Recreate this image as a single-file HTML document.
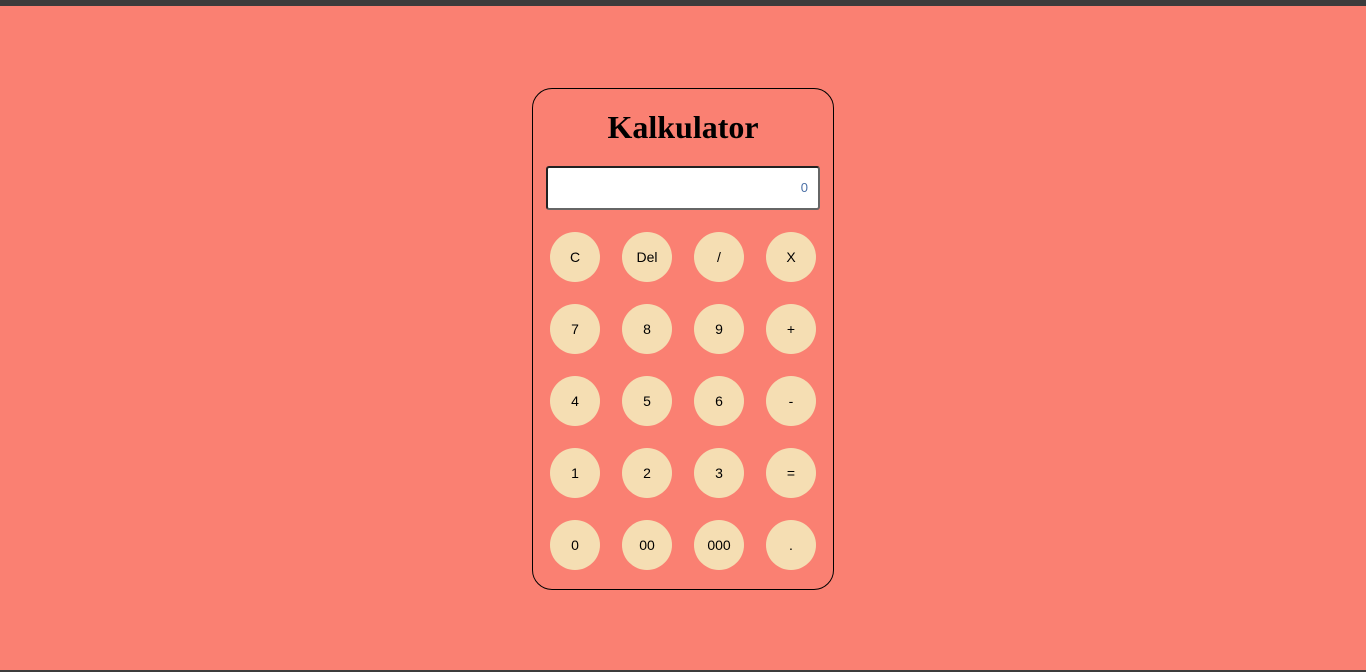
<!DOCTYPE html>
<html><head><style>
body{margin:0;width:1366px;height:672px;background:#fa8072;position:relative;overflow:hidden;font-family:"Liberation Sans",sans-serif}
.top{position:absolute;top:0;left:0;width:1366px;height:6px;background:#3c3c3c}
.bot{position:absolute;bottom:0;left:0;width:1366px;height:2px;background:#3c3c3c}
.card{position:absolute;left:532px;top:88px;width:300px;height:500px;border:1px solid #000;border-radius:20px}
h1{position:absolute;top:20px;left:0;width:300px;margin:0;text-align:center;font-family:"Liberation Serif",serif;font-size:32px;font-weight:bold;line-height:36px}
.inp{position:absolute;left:13px;top:77px;width:270px;height:40px;background:#fff;border:2px solid #222;border-right-color:#666;border-bottom-color:#666;border-radius:3px;text-align:right;box-sizing:content-box}
.inp span{position:absolute;right:10px;top:12px;font-size:13px;color:#4a6fa5}
.b{position:absolute;width:50px;height:50px;border-radius:50%;background:#f5deb3;text-align:center;line-height:50px;font-size:14px;color:#000}
</style></head><body>
<div class="top"></div><div class="bot"></div>
<div class="card">
<h1>Kalkulator</h1>
<div class="inp"><span>0</span></div>
<div class="b" style="left:17px;top:143px">C</div><div class="b" style="left:89px;top:143px">Del</div><div class="b" style="left:161px;top:143px">/</div><div class="b" style="left:233px;top:143px">X</div>
<div class="b" style="left:17px;top:215px">7</div><div class="b" style="left:89px;top:215px">8</div><div class="b" style="left:161px;top:215px">9</div><div class="b" style="left:233px;top:215px">+</div>
<div class="b" style="left:17px;top:287px">4</div><div class="b" style="left:89px;top:287px">5</div><div class="b" style="left:161px;top:287px">6</div><div class="b" style="left:233px;top:287px">-</div>
<div class="b" style="left:17px;top:359px">1</div><div class="b" style="left:89px;top:359px">2</div><div class="b" style="left:161px;top:359px">3</div><div class="b" style="left:233px;top:359px">=</div>
<div class="b" style="left:17px;top:431px">0</div><div class="b" style="left:89px;top:431px">00</div><div class="b" style="left:161px;top:431px">000</div><div class="b" style="left:233px;top:431px">.</div>
</div>
</body></html>
